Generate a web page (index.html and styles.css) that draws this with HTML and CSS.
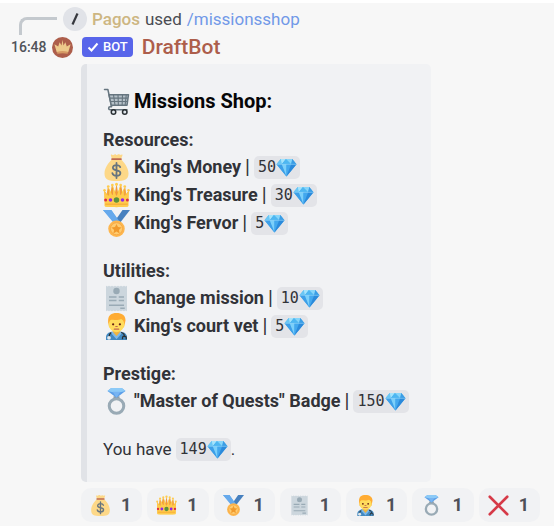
FILE: index.html
```html
<!DOCTYPE html>
<html lang="en">
<head>
<meta charset="utf-8">
<title>Missions Shop</title>
<link rel="stylesheet" href="styles.css">
</head>
<body>
<svg class="sprite" aria-hidden="true">
  <defs>
    <linearGradient id="gem-top" x1="0" y1="0" x2="1" y2="1"><stop offset="0" stop-color="#4fb4ee"/><stop offset="1" stop-color="#2f93e4"/></linearGradient>
    <symbol id="cart" viewBox="0 0 36 36">
      <path d="M2 2h4.500l5 23H9.500a2 2 0 0 0 0 4H32" fill="none" stroke="#66757f" stroke-width="2" stroke-linecap="round" stroke-linejoin="round"/>
      <path d="M8 9h26l-2 14H11z" fill="#b5c0c8" stroke="#66757f" stroke-width="2" stroke-linejoin="round"/>
      <path d="M9 13.500h24M10 18h23M14 9l2 14M20 9l.5 14M26 9l-.5 14M31 9l-1.500 14" fill="none" stroke="#66757f" stroke-width="1.500"/>
      <circle cx="14" cy="32" r="3" fill="#e1e8ed" stroke="#292f33" stroke-width="2"/>
      <circle cx="29" cy="32" r="3" fill="#e1e8ed" stroke="#292f33" stroke-width="2"/>
    </symbol>
    <symbol id="bag" viewBox="0 0 36 36">
      <path d="M12 7 10.500 2c-.4-1.300.6-1.700 1.700-1C14 2 14.500.2 16 .2s1.500 1 2.500 1S20 0 21.500.3 23 1.600 24.500 1s1.700 0 1.300 1.200L24 7c4 4 10 11 10 19 0 8-5 10-16 10S2 34 2 26C2 18 8 11 12 7z" fill="#fdd888"/>
      <path d="M12 5.500h12c1.500 0 1.500 2.500 0 2.500H12c-1.500 0-1.500-2.500 0-2.500z" fill="#bf6952"/>
      <path d="M23 17.500c-.7-1.700-2.300-2.700-5-2.700-3 0-4.800 1.400-4.800 3.500 0 5 10 2 10 7 0 2.300-2 3.700-5.200 3.700-3 0-5-1.200-5.500-3.500M18 12v20" fill="none" stroke="#67757f" stroke-width="2.400" stroke-linecap="round"/>
    </symbol>
    <symbol id="crown" viewBox="0 0 36 36">
      <path d="M3 31 1.500 11 5 16 6.500 6 10 14 12 3l4 11 2-12 2 12 4-11 2 11 3.500-8L31 16l3.500-5L33 31z" fill="#f4a52c"/>
      <path d="M3 33 1.500 12 6 18 7.500 7l4.500 10 1-13 4 13h2l4-13 1 13 4.500-10L30 18l4.500-6L33 33z" fill="#ffcc4d"/>
      <path d="M7.500 10v8M12.700 8v9M18 7v11M23.300 8v9M28.500 10v8" stroke="#ee9547" stroke-width="1.300"/>
      <g fill="#ffcc4d"><circle cx="2" cy="11" r="1.700"/><circle cx="7" cy="6" r="1.800"/><circle cx="12.500" cy="4" r="1.800"/><circle cx="18" cy="3" r="2"/><circle cx="23.500" cy="4" r="1.800"/><circle cx="29" cy="6" r="1.800"/><circle cx="34" cy="11" r="1.700"/></g>
      <path d="M2 19h32v13c0 2-32 2-32 0z" fill="#ffcc4d"/>
      <path d="M3 29.500h30" fill="none" stroke="#f4a02c" stroke-width="1.200"/>
      <circle cx="18" cy="24" r="3.700" fill="#5c913b"/><circle cx="10" cy="24" r="2.400" fill="#9226e8"/><circle cx="26" cy="24" r="2.400" fill="#9226e8"/><circle cx="3.500" cy="24" r="2" fill="#dd2e44"/><circle cx="32.500" cy="24" r="2" fill="#dd2e44"/>
    </symbol>
    <symbol id="medal" viewBox="0 0 36 36">
      <path d="M36 0H26L17 13l5 5z" fill="#4680bf"/>
      <path d="M0 0h11l12 17-6 2z" fill="#55acee"/>
      <path d="M0 0h11l10 14-7 3z" fill="#66a9ec"/>
      <circle cx="18" cy="25" r="11" fill="#fdb64e"/>
      <circle cx="18" cy="25" r="8" fill="#ffcc70" stroke="#f5a33d" stroke-width="1"/>
      <path d="m18 18.500 2 4.300 4.700.5-3.500 3.200 1 4.700-4.200-2.400-4.200 2.400 1-4.700-3.500-3.200 4.700-.5z" fill="#f19a2c"/>
    </symbol>
    <symbol id="receipt" viewBox="0 0 36 36">
      <path d="M4 1l2 1 2-1 2 1 2-1 2 1 2-1 2 1 2-1 2 1 2-1 2 1 2-1 2 1 2-1v34l-2-1-2 1-2-1-2 1-2-1-2 1-2-1-2 1-2-1-2 1-2-1-2 1-2-1-2 1z" fill="#ccd6dd"/>
      <circle cx="18" cy="8" r="4.300" fill="#99aab5"/>
      <path d="M8 16h10M21 16h7M8 20.500h10M21 20.500h7M8 27h20M23 31h6" stroke="#99aab5" stroke-width="2"/>
    </symbol>
    <symbol id="vet" viewBox="0 0 36 36">
      <path d="M4 36v-4c0-4 4-7 9-7h10c5 0 9 3 9 7v4z" fill="#4289c1"/>
      <path d="M13 22h10v5l-5 5-5-5z" fill="#eeb442"/>
      <path d="m13 25 5 6 5-6 3 1-8 9-8-9z" fill="#7db8e8"/>
      <path d="M7 9C7 3 11 0 18 0s12 3 12 10l-2 9H8z" fill="#ffac33"/>
      <ellipse cx="18" cy="15" rx="10.500" ry="10.500" fill="#ffdc5d"/>
      <path d="M7 15c-1-9 4-13 12-13 7 0 11 4 10 13-1-5-3-6-5-7-3 2-11 1-13 1-3 1-3 4-4 6z" fill="#ffac33"/>
      <circle cx="13.500" cy="15" r="1.500" fill="#662113"/><circle cx="22.500" cy="15" r="1.500" fill="#662113"/>
      <path d="M15 21.500h6M17 18h2" stroke="#c1694f" stroke-width="1.500" stroke-linecap="round"/>
      <path d="M11 26c-3 2-3 4-3 6M24 26c4 1 5 3 4 6M26 35v-2c0-3 5-3 5 0v2" fill="none" stroke="#292f33" stroke-width="1.700"/>
      <circle cx="8" cy="33" r="2.500" fill="#e1e8ed"/>
    </symbol>
    <symbol id="ring" viewBox="0 0 36 36">
      <path d="M14 11h8v4h-8z" fill="#8899a6"/>
      <circle cx="18" cy="24" r="9.700" fill="none" stroke="#99aab5" stroke-width="4"/>
      <path d="M11 0h14l5 4-12 9L6 4z" fill="#5c9fe8"/>
      <path d="M11 0h14l5 4-7 1.500H13L6 4z" fill="#8ccaf7"/>
      <path d="m13 5 5 8 5-8z" fill="#77b4f2"/>
    </symbol>
    <symbol id="cross" viewBox="0 0 36 36">
      <path d="M3 3l30 30M33 3 3 33" stroke="#d63a48" stroke-width="4.500" stroke-linecap="round"/>
    </symbol>
    <symbol id="gem" viewBox="0 0 40 36">
      <path d="M9 2h22l8 10-19 23L1 12z" fill="url(#gem-top)"/>
      <path d="M9 2 1 12h10z" fill="#69c6f5"/><path d="m9 2 2 10 8-10z" fill="#a5e4fc"/><path d="m19 2-8 10h18z" fill="#4eb7f1"/><path d="M19 2h12l-2 10z" fill="#86d5fa"/><path d="m31 2 8 10H29z" fill="#3b9ee5"/>
      <path d="M1 12h10l9 23z" fill="#3d9fe8"/><path d="M11 12h9v23z" fill="#7cd0fa"/><path d="M20 12h9l-9 23z" fill="#43a8ee"/><path d="M29 12h10L20 35z" fill="#2b8adb"/>
      <path d="M1 12h38" stroke="#a5dcfa" stroke-width="1"/>
    </symbol>
  </defs>
</svg>

<article class="message">
  <div class="reply">
    <span class="spine"></span>
    <span class="command-icon"><svg viewBox="0 0 24 24" aria-hidden="true"><path d="M9.500 17.500 14.500 6.500" stroke="#36383e" stroke-width="2.200"/></svg></span>
    <span class="user">Pagos</span>
    <span>used</span>
    <a class="command" href="#">/missionsshop</a>
  </div>
  <header class="author">
    <time class="time">16:48</time>
    <svg class="avatar" viewBox="0 0 22 22" aria-hidden="true"><circle cx="11" cy="11" r="11" fill="#ad5e4b"/><path d="M5 16 2.500 7.500l4 2.500L8 5.500l2 3.500L11 3l1 6 2-3.500 1.500 4.500 4-2.500L17 16z" fill="#edc98b"/><path d="M5.500 15.500q5.500-1.500 11 0v2q-5.500-1.200-11 0z" fill="#d69a65"/></svg>
    <span class="tag"><svg viewBox="0 0 12 12" aria-hidden="true"><path d="m1.500 6.500 3 3 6-7" fill="none" stroke="#fff" stroke-width="2"/></svg>BOT</span>
    <span class="bot">DraftBot</span>
  </header>

  <div class="body">
    <section class="embed">
      <h1 class="title"><svg class="emoji"><use href="#cart"/></svg>Missions Shop:</h1>
      <div class="group">
        <h2>Resources:</h2>
        <p class="item"><svg class="emoji"><use href="#bag"/></svg><b>King's Money</b><span class="bar">|</span><code>50<svg><use href="#gem"/></svg></code></p>
        <p class="item"><svg class="emoji"><use href="#crown"/></svg><b>King's Treasure</b><span class="bar">|</span><code>30<svg><use href="#gem"/></svg></code></p>
        <p class="item"><svg class="emoji"><use href="#medal"/></svg><b>King's Fervor</b><span class="bar">|</span><code>5<svg><use href="#gem"/></svg></code></p>
      </div>
      <div class="group">
        <h2>Utilities:</h2>
        <p class="item"><svg class="emoji"><use href="#receipt"/></svg><b>Change mission</b><span class="bar">|</span><code>10<svg><use href="#gem"/></svg></code></p>
        <p class="item"><svg class="emoji"><use href="#vet"/></svg><b>King's court vet</b><span class="bar">|</span><code>5<svg><use href="#gem"/></svg></code></p>
      </div>
      <div class="group">
        <h2>Prestige:</h2>
        <p class="item"><svg class="emoji"><use href="#ring"/></svg><b>"Master of Quests" Badge</b><span class="bar">|</span><code>150<svg><use href="#gem"/></svg></code></p>
      </div>
      <p class="item balance"><span>You have</span> <span class="amount"><code>149<svg><use href="#gem"/></svg></code>.</span></p>
    </section>
    <div class="reactions">
      <button type="button"><svg><use href="#bag"/></svg>1</button>
      <button type="button"><svg><use href="#crown"/></svg>1</button>
      <button type="button"><svg><use href="#medal"/></svg>1</button>
      <button type="button"><svg><use href="#receipt"/></svg>1</button>
      <button type="button"><svg><use href="#vet"/></svg>1</button>
      <button type="button"><svg><use href="#ring"/></svg>1</button>
      <button type="button"><svg><use href="#cross"/></svg>1</button>
    </div>
  </div>
</article>
</body>
</html>
```
FILE: styles.css
```css
* { box-sizing: border-box; }

body {
  margin: 0;
  border-top: 3px solid #fff;
  background: #f7f7f7;
  color: #313338;
  font: 18px/28px Roboto, "Liberation Sans", sans-serif;
}

h1, h2, p { margin: 0; }

svg { display: block; flex: none; }

.sprite { position: absolute; width: 0; height: 0; }

.reply {
  display: flex;
  align-items: center;
  gap: 5px;
  height: 32px;
  padding-left: 19px;
  color: #4a4c53;
  font-size: 17px;
}

.spine {
  width: 38px;
  height: 18px;
  margin-right: 1px;
  align-self: flex-end;
  border: solid #c4c9ce;
  border-width: 3px 0 0 3px;
  border-radius: 8px 0 0 0;
}

.command-icon {
  width: 24px;
  height: 24px;
  border-radius: 50%;
  background: #e1e3e8;
}

.user { color: #cdb682; font-weight: 500; }

.command { color: #7199e8; text-decoration: none; }

.author {
  display: flex;
  align-items: center;
  height: 24px;
  padding-left: 11px;
}

.time { width: 41px; color: #50535a; font-size: 14px; font-weight: 500; }

.avatar { width: 21px; height: 21px; }

.tag {
  display: flex;
  align-items: center;
  gap: 4px;
  height: 20px;
  margin: 0 9px;
  padding: 0 5px;
  border-radius: 4px;
  background: #5865ea;
  color: #fff;
  font-size: 13px;
  font-weight: 500;
}

.tag svg { width: 12px; height: 12px; }

.bot { color: #ad5e4b; font-size: 21px; font-weight: 500; }

.body { padding: 5px 14px 4px 81px; }

.embed {
  width: fit-content;
  padding: 23px 22px 19px 16px;
  border-left: 6px solid #e1e3e7;
  border-radius: 5px;
  background: #f1f2f4;
}

.title {
  display: flex;
  align-items: center;
  gap: 4px;
  margin-bottom: 11px;
  color: #060607;
  font-size: 20px;
  font-weight: 700;
}

.group { margin-bottom: 20px; }

h2 { font-size: 18px; line-height: 27px; font-weight: 700; }

.item { display: flex; align-items: center; gap: 4px; height: 28px; }

.emoji { width: 27px; height: 27px; }

.bar { font-size: 20px; }

code {
  display: flex;
  align-items: center;
  height: 23px;
  padding: 0 3px 0 4px;
  border-radius: 5px;
  background: #e3e4e8;
  font: 15px/23px "DejaVu Sans Mono", monospace;
}

code svg { width: 21px; height: 19px; }

.balance { font-size: 17px; }

.amount { display: flex; align-items: center; }

.reactions {
  display: grid;
  grid-template-columns: repeat(7, 1fr);
  gap: 5px;
  margin-top: 6px;
}

.reactions button {
  display: flex;
  align-items: center;
  justify-content: space-between;
  height: 34px;
  padding: 0 11px 0 9px;
  border: 0;
  border-radius: 10px;
  background: #f1f2f4;
  color: #4e5058;
  font: 700 18px/28px Roboto, "Liberation Sans", sans-serif;
}

.reactions svg { width: 21px; height: 21px; }
```
